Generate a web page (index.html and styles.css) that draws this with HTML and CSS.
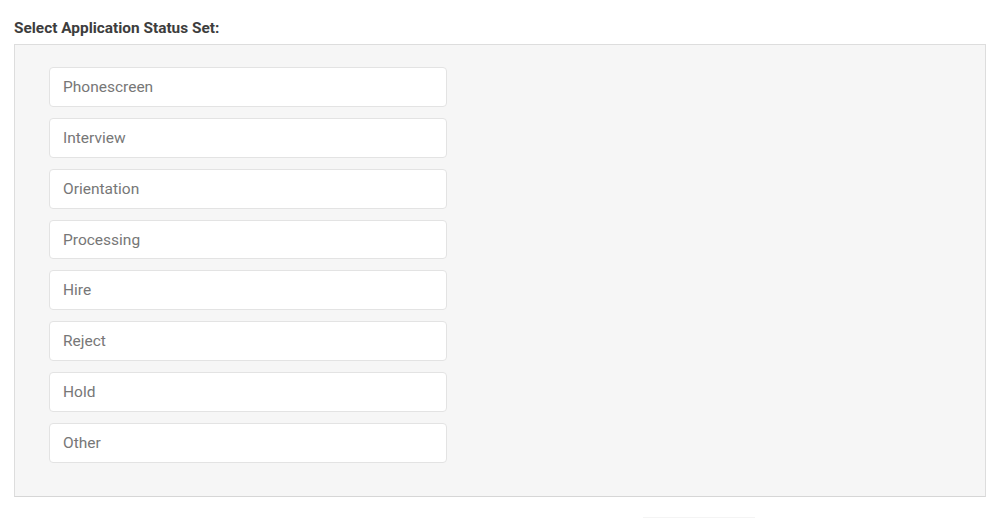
FILE: index.html
```html
<!DOCTYPE html>
<html>
<head>
<meta charset="utf-8">
<link rel="stylesheet" href="styles.css">
</head>
<body>
<div class="page">
  <label class="title">Select Application Status Set:</label>
  <div class="panel">
    <div class="item">Phonescreen</div>
    <div class="item">Interview</div>
    <div class="item">Orientation</div>
    <div class="item">Processing</div>
    <div class="item">Hire</div>
    <div class="item">Reject</div>
    <div class="item">Hold</div>
    <div class="item">Other</div>
  </div>
  <div class="footer"><span class="btn"></span></div>
</div>
</body>
</html>
```
FILE: styles.css
```css
html, body { margin: 0; padding: 0; background: #fff; }
body { font-family: Roboto, "Liberation Sans", sans-serif; }
* { box-sizing: border-box; }
.page { padding: 18px 14px 0 14px; }
.title { display: block; font-size: 15.4px; font-weight: 700; color: #3d3d3d; line-height: 20px; margin-bottom: 6px; }
.panel {
  background: #f6f6f6;
  border: 1px solid #ddd;
  border-bottom-color: #d6d6d6;
  padding: 22px 34px 33px 34px;
  display: flex; flex-direction: column; gap: 11px;
}
.item {
  width: 398px; height: 39.86px;
  background: #fff;
  border: 1px solid #e3e3e3;
  border-radius: 4px;
  display: flex; align-items: center;
  padding-left: 13px;
  font-size: 15.5px; color: #777;
}
.footer { display: flex; padding-left: 629px; padding-top: 20px; }
.btn { width: 112px; height: 1px; background: #f4f4f4; }
```
